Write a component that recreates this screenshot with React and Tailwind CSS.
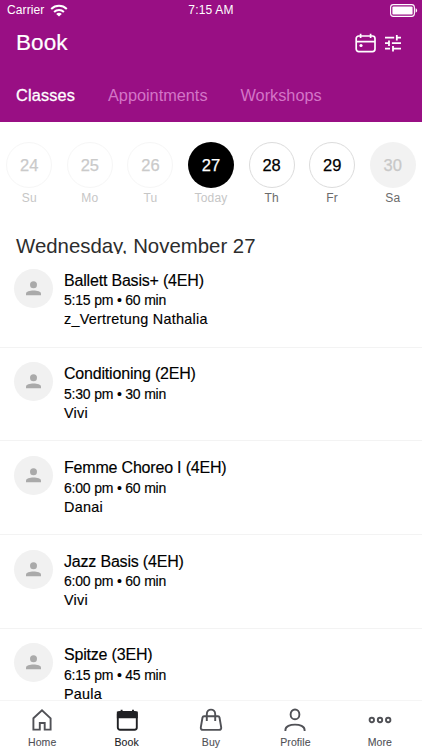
import React from 'react';

const days = [
  { date: 24, label: 'Su', circle: 'border border-[#f6f6f6] text-[#cacaca]', text: 'text-[#c6c6c6]' },
  { date: 25, label: 'Mo', circle: 'border border-[#f6f6f6] text-[#cacaca]', text: 'text-[#c6c6c6]' },
  { date: 26, label: 'Tu', circle: 'border border-[#f6f6f6] text-[#cacaca]', text: 'text-[#c6c6c6]' },
  { date: 27, label: 'Today', circle: 'bg-black text-white', text: 'text-[#c6c6c6]' },
  { date: 28, label: 'Th', circle: 'border border-[#dcdcdc] text-black', text: 'text-[#6b6b6b]' },
  { date: 29, label: 'Fr', circle: 'border border-[#dcdcdc] text-black', text: 'text-[#6b6b6b]' },
  { date: 30, label: 'Sa', circle: 'bg-[#f2f2f2] text-[#c8c8c8]', text: 'text-[#6b6b6b]' },
];

const classes = [
  { name: 'Ballett Basis+ (4EH)', time: '5:15 pm • 60 min', teacher: 'z_Vertretung Nathalia' },
  { name: 'Conditioning (2EH)', time: '5:30 pm • 30 min', teacher: 'Vivi' },
  { name: 'Femme Choreo I (4EH)', time: '6:00 pm • 60 min', teacher: 'Danai' },
  { name: 'Jazz Basis (4EH)', time: '6:00 pm • 60 min', teacher: 'Vivi' },
  { name: 'Spitze (3EH)', time: '6:15 pm • 45 min', teacher: 'Paula' },
];

const StatusBar = () => (
  <div className="flex h-5 items-center justify-between pl-[7px] pr-[4px] text-white">
    <div className="flex w-32 items-center gap-[6px]">
      <span className="text-[12px] leading-5 tracking-[0.1px]">Carrier</span>
      <svg width="18" height="13" viewBox="0 0 18 13" fill="none">
        <path d="M1.2 5C5.6.8 12.4.8 16.8 5" stroke="white" strokeWidth="2" />
        <path d="M4.1 8C6.9 5.3 11.1 5.3 13.9 8" stroke="white" strokeWidth="2" />
        <path d="M6.2 9.9C7.8 8.4 10.2 8.4 11.8 9.9L9 12.6Z" fill="white" />
      </svg>
    </div>
    <span className="-ml-[3px] text-[12px] leading-5 tracking-[0.2px]">7:15 AM</span>
    <div className="flex w-32 justify-end">
      <svg width="28" height="13" viewBox="0 0 28 13" fill="none">
        <rect x="0.6" y="0.6" width="23.8" height="11.8" rx="2.8" stroke="white" strokeWidth="1.1" />
        <rect x="2.4" y="2.4" width="20.2" height="8.2" rx="1.2" fill="white" />
        <path d="M25.6 4.3C27.6 5 27.6 8 25.6 8.7Z" fill="white" />
      </svg>
    </div>
  </div>
);

const Header = () => (
  <header className="h-[122px] shrink-0 bg-[#990f84]">
    <StatusBar />
    <div className="flex h-[45px] items-center justify-between pl-4 pr-[20px]">
      <h1 className="text-[22.5px] leading-8 tracking-[0.1px] text-white [-webkit-text-stroke:0.2px_white]">Book</h1>
      <div className="flex items-center gap-[8px]">
        <svg width="21" height="20" viewBox="0 0 21 20" fill="none" stroke="white" strokeWidth="1.7">
          <rect x="1.2" y="3" width="18.8" height="15.6" rx="2.5" />
          <path d="M1 8.6H20M5.6 0.8V5M15.6 0.8V5" />
          <circle cx="6" cy="12.5" r="1.6" fill="white" stroke="none" />
        </svg>
        <svg width="18" height="18" viewBox="0 0 18 18" fill="none" stroke="white" strokeWidth="1.8">
          <path d="M1 3.7H10.2M12.8 3.7H17M12.8 0.9V6.5M1 9.2H5M7.9 9.2H17M5 6.4V12M1 14.7H6M9 14.7H17M9 11.9V17.5" />
        </svg>
      </div>
    </div>
    <nav className="flex gap-[33px] px-4 pt-[18px] text-[16.3px] leading-6 text-[#d375c7]">
      <span className="tracking-[0.15px] text-white [-webkit-text-stroke:0.3px_white]">Classes</span>
      <span>Appointments</span>
      <span>Workshops</span>
    </nav>
  </header>
);

const DayPicker = () => (
  <div className="-mx-px flex h-[110px] shrink-0 pt-5">
    {days.map((day) => (
      <div key={day.date} className="flex flex-1 flex-col items-center">
        <div className={`flex h-[46px] w-[46px] items-center justify-center rounded-full text-[16.5px] [-webkit-text-stroke:0.25px_currentColor] ${day.circle}`}>
          {day.date}
        </div>
        <span className={`mt-[2px] text-[12px] leading-4 tracking-[0.2px] ${day.text}`}>{day.label}</span>
      </div>
    ))}
  </div>
);

const ClassRow = ({ item }) => (
  <li className="flex h-[93.7px] shrink-0 border-b border-[#f3f3f3] pl-[14px] text-black">
    <div className="mt-[14.5px] flex h-[39px] w-[39px] items-center justify-center rounded-full bg-[#f1f1f1]">
      <svg width="15" height="15" viewBox="0 0 15 15" fill="#aaa">
        <circle cx="7.5" cy="3.7" r="3.5" />
        <path d="M0 14.2V12.4C0 8.4 15 8.4 15 12.4V14.2Z" />
      </svg>
    </div>
    <div className="ml-[11px] pt-[15.6px] [-webkit-text-stroke:0.15px_currentColor]">
      <div className="h-[21.6px] text-[16px] leading-[22px] tracking-[-0.19px]">{item.name}</div>
      <div className="h-[19px] text-[14px] leading-[19px] tracking-[-0.2px]">{item.time}</div>
      <div className="h-[19px] text-[14.4px] leading-[18px] tracking-[0.25px]">{item.teacher}</div>
    </div>
  </li>
);

const tabs = [
  {
    label: 'Home',
    icon: <path d="M2.4 9.3L11 1.3L19.6 9.3V20.6H13.7V14H8.8V20.6H2.4Z" />,
  },
  {
    label: 'Book',
    active: true,
    icon: (
      <>
        <rect x="1.8" y="3" width="19" height="17.8" rx="2.2" />
        <path d="M1.8 3.5H20.8V8.2H1.8ZM5.6 0.8V4M17 0.8V4" fill="currentColor" />
      </>
    ),
  },
  {
    label: 'Buy',
    icon: (
      <>
        <path d="M4 7.2H18C18.9 7.2 19.3 7.7 19.5 8.5L21.2 18.4C21.4 20 20.6 20.9 19 20.9H3C1.4 20.9 0.6 20 0.8 18.4L2.5 8.5C2.7 7.7 3.1 7.2 4 7.2Z" />
        <path d="M6.8 12V5.2C6.8 -0.9 15.2 -0.9 15.2 5.2V12" />
      </>
    ),
  },
  {
    label: 'Profile',
    icon: (
      <>
        <ellipse cx="11" cy="5.4" rx="4.4" ry="4.9" />
        <path d="M1.4 22V21C1.4 13.8 20.6 13.8 20.6 21V22" />
      </>
    ),
  },
  {
    label: 'More',
    icon: (
      <>
        <circle cx="2.8" cy="11" r="2.2" />
        <circle cx="11" cy="11" r="2.2" />
        <circle cx="19.2" cy="11" r="2.2" />
      </>
    ),
  },
];

const TabBar = () => (
  <nav className="flex h-[50px] shrink-0 border-t border-[#f5f5f5] bg-white">
    {tabs.map((tab) => (
      <div key={tab.label} className={`flex flex-1 flex-col items-center pt-[8px] ${tab.active ? 'text-[#202124]' : 'text-[#505156]'}`}>
        <svg width="22" height="22" viewBox="0 0 22 22" fill="none" stroke="currentColor" strokeWidth="1.9" className="overflow-visible">
          {tab.icon}
        </svg>
        <span className="mt-[4px] text-[10.5px] leading-[14px] tracking-[0.1px] [-webkit-text-stroke:0.1px_currentColor]">{tab.label}</span>
      </div>
    ))}
  </nav>
);

const App = () => (
  <div className="flex h-[750px] w-[422px] flex-col overflow-hidden bg-white font-['Liberation_Sans',Arial,sans-serif]">
    <Header />
    <DayPicker />
    <main className="flex min-h-0 flex-1 flex-col overflow-hidden">
      <h2 className="h-[22px] shrink-0 overflow-hidden pl-4 text-[20.4px] leading-[28px] text-[#2d2d2d]">Wednesday, November 27</h2>
      <ul className="flex flex-col">
        {classes.map((item) => (
          <ClassRow key={item.name} item={item} />
        ))}
      </ul>
    </main>
    <TabBar />
  </div>
);

export default App;
